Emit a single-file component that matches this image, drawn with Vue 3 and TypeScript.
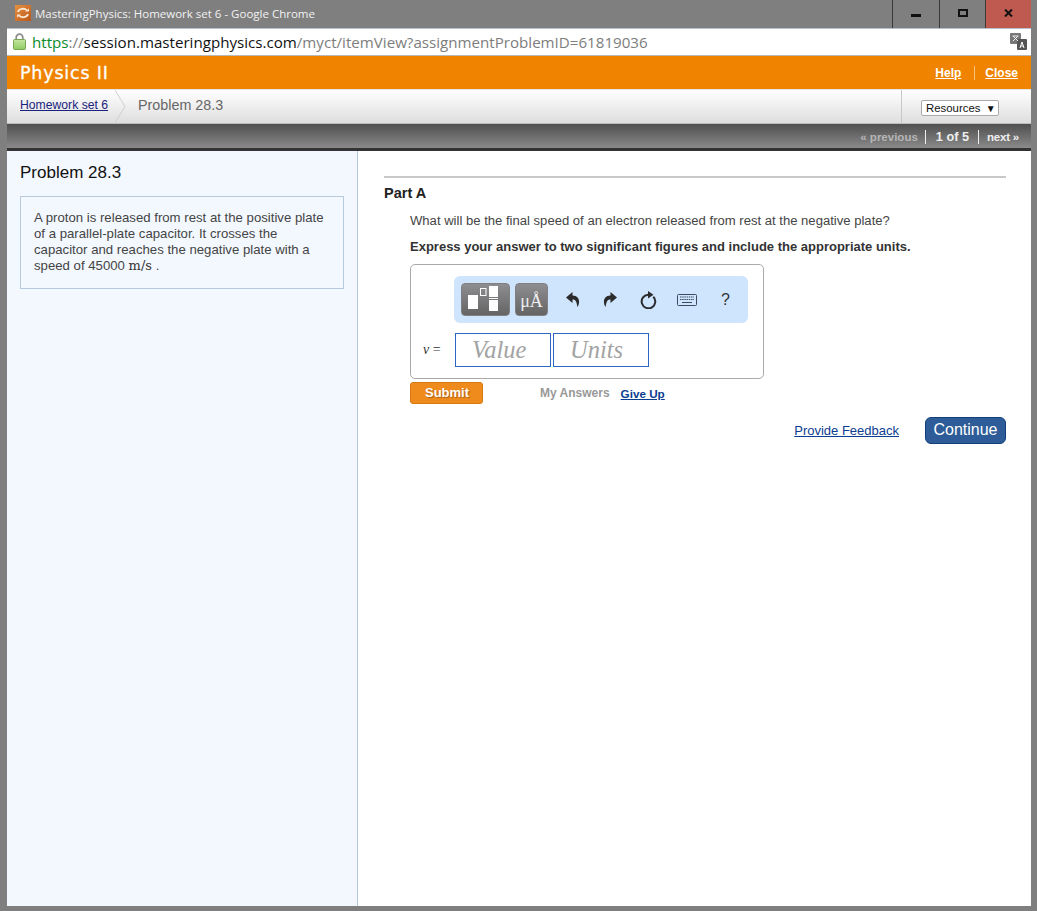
<template>
  <div class="window">
    <header class="titlebar">
      <svg class="favicon" width="16" height="16" viewBox="0 0 16 16">
        <defs>
          <linearGradient id="fav" x1="0" y1="0" x2="1" y2="1">
            <stop offset="0" stop-color="#e8913f" />
            <stop offset="1" stop-color="#b9561a" />
          </linearGradient>
        </defs>
        <rect width="16" height="16" fill="url(#fav)" />
        <path d="M3 7a5 4 0 0 1 9-1.500M13 9a5 4 0 0 1-9 1.500" fill="none" stroke="#fbe6d0" stroke-width="1.800" />
        <path d="M10 6.500h4v-3zM6 9.500H2v3z" fill="#fbe6d0" />
      </svg>
      <span class="title">MasteringPhysics: Homework set 6 - Google Chrome</span>
      <div class="controls">
        <div class="ctl ctl-min"><i class="min-glyph"></i></div>
        <div class="ctl ctl-max"><i class="max-glyph"></i></div>
        <div class="ctl ctl-close">
          <svg width="9" height="8" viewBox="0 0 9 8"><path d="M1 .5l7 7M8 .5l-7 7" stroke="#111" stroke-width="2" /></svg>
        </div>
      </div>
    </header>

    <div class="urlbar">
      <svg class="lock" width="13" height="17" viewBox="0 0 13 17">
        <defs>
          <linearGradient id="lockbody" x1="0" y1="0" x2="0" y2="1">
            <stop offset="0" stop-color="#c4e6a0" />
            <stop offset="1" stop-color="#8fcb62" />
          </linearGradient>
        </defs>
        <path d="M3.200 7V4.500a3.300 3.300 0 0 1 6.600 0V7" fill="none" stroke="#8c8c8c" stroke-width="1.700" />
        <rect x=".5" y="6.500" width="12" height="10" rx="1" fill="url(#lockbody)" stroke="#76a653" />
      </svg>
      <span class="url"><span class="https">https</span><span class="dim">://</span><span>session.masteringphysics.com</span><span class="dim">/myct/itemView?assignmentProblemID=61819036</span></span>
      <svg class="translate" width="17" height="17" viewBox="0 0 17 17">
        <rect x="0" y="0" width="11" height="11" rx="1" fill="#777" />
        <rect x="7" y="6" width="10" height="11" rx="1" fill="#555" />
        <path d="M3 3l5 5M8 3l-5 5M2.500 3h6" stroke="#eee" stroke-width="1" fill="none" />
        <path d="M10 15l2-6 2 6M10.800 13h2.400" stroke="#fff" stroke-width="1" fill="none" />
      </svg>
    </div>

    <div class="course">
      <span class="course-name">Physics II</span>
      <nav class="course-links">
        <a>Help</a>
        <i class="course-sep"></i>
        <a>Close</a>
      </nav>
    </div>

    <div class="crumbs">
      <a class="crumb-link">Homework set 6</a>
      <svg class="chevron" width="11" height="33" viewBox="0 0 11 33">
        <path d="M0 0l10 16.500L0 33" fill="none" stroke="#cfcfcf" />
      </svg>
      <span class="crumb-current">Problem 28.3</span>
      <div class="resources-wrap">
        <div class="resources">Resources <span class="caret">▼</span></div>
      </div>
    </div>

    <div class="pager">
      <span class="prev">« previous</span>
      <i class="pager-sep sep-first"></i>
      <span class="count">1 of 5</span>
      <i class="pager-sep sep-second"></i>
      <span class="next">next »</span>
    </div>

    <main class="content">
      <aside class="sidebar">
        <h2>Problem 28.3</h2>
        <div class="intro">
          A proton is released from rest at the positive plate of a parallel-plate capacitor. It crosses the capacitor and reaches the negative plate with a speed of 45000 <span class="unit">m/s</span> .
        </div>
      </aside>

      <section class="part">
        <div class="part-title">Part A</div>
        <div class="part-body">
          <p class="question">What will be the final speed of an electron released from rest at the negative plate?</p>
          <p class="instruction">Express your answer to two significant figures and include the appropriate units.</p>

          <div class="answer-box">
            <div class="toolbar">
              <div class="tool tool-templates">
                <svg width="47" height="31" viewBox="0 0 47 31">
                  <rect x="6" y="11" width="10" height="14" fill="#fff" />
                  <rect x="18.500" y="4.500" width="5.500" height="7" fill="none" stroke="#fff" />
                  <rect x="27" y="2" width="9" height="11" fill="#fff" />
                  <rect x="27" y="14" width="9" height="1" fill="#fff" />
                  <rect x="27" y="16" width="9" height="11" fill="#fff" />
                </svg>
              </div>
              <div class="tool tool-units">μÅ</div>
              <div class="icons">
                <svg width="14" height="15" viewBox="0 0 14 15"><path d="M6.500 0L0 5.500 6.500 11V7.500c2.700 0 4.300 1.700 4.800 7.500C14 12 14.500 3.500 6.500 3.500z" fill="#2b2b2b" /></svg>
                <svg width="14" height="15" viewBox="0 0 14 15"><path d="M7.500 0L14 5.500 7.500 11V7.500c-2.700 0-4.300 1.700-4.800 7.500C0 12-.5 3.500 7.500 3.500z" fill="#2b2b2b" /></svg>
                <svg width="17" height="18" viewBox="0 0 17 18"><path d="M13.300 5.700A6.800 6.800 0 1 1 8 3.700" fill="none" stroke="#2b2b2b" stroke-width="2" /><path d="M8 0l5.500 3.700L8 7.400z" fill="#2b2b2b" /></svg>
                <svg width="20" height="12" viewBox="0 0 20 12">
                  <rect x=".5" y=".5" width="19" height="11" rx="1" fill="none" stroke="#3d4c5c" />
                  <path d="M3 3h14M3 5.500h14" stroke="#3d4c5c" stroke-dasharray="1.500 .7" />
                  <path d="M5 8.500h10" stroke="#3d4c5c" />
                </svg>
                <span class="help">?</span>
              </div>
            </div>
            <div class="inputs">
              <span class="var"><em>v</em> =</span>
              <div class="field">Value</div>
              <div class="field">Units</div>
            </div>
          </div>

          <div class="actions">
            <button class="submit">Submit</button>
            <span class="my-answers">My Answers</span>
            <a class="give-up">Give Up</a>
          </div>
        </div>
        <div class="footer">
          <a class="feedback">Provide Feedback</a>
          <button class="continue">Continue</button>
        </div>
      </section>
    </main>
  </div>
</template>

<script setup lang="ts">
</script>

<style>
html, body {
  margin: 0;
  background: #7f7f7f;
}
</style>

<style scoped>
.window {
  width: 1037px;
  height: 911px;
  overflow: hidden;
  background: #7f7f7f;
  display: flex;
  flex-direction: column;
  font-family: "Liberation Sans", Arial, sans-serif;
  box-sizing: border-box;
  padding: 0 6px 5px 7px;
}

.titlebar {
  height: 29px;
  flex: none;
  display: flex;
  align-items: flex-start;
}

.favicon {
  margin: 5px 4px 0 8px;
}

.title {
  font-family: "Open Sans", sans-serif;
  font-size: 11.500px;
  line-height: 28px;
  color: #f2f2f2;
}

.controls {
  margin-left: auto;
  display: flex;
  height: 29px;
  border-bottom: 1px solid #3a3a3a;
  box-sizing: border-box;
}

.ctl {
  height: 28px;
  display: flex;
  justify-content: center;
  border-left: 1px solid #3a3a3a;
  box-sizing: border-box;
}

.ctl-min { width: 47px; }
.ctl-max { width: 46px; }
.ctl-close { width: 46px; background: #bf5a50; padding-top: 9px; }

.min-glyph {
  width: 10px;
  height: 3px;
  background: #111;
  margin-top: 14px;
}

.max-glyph {
  width: 6px;
  height: 4px;
  border: 2px solid #111;
  margin-top: 9px;
}

.urlbar {
  height: 25px;
  flex: none;
  background: #fff;
  display: flex;
  align-items: center;
  border-top: 1px solid #b9c3cc;
  border-bottom: 1px solid #b8b8b8;
  margin-top: -1px;
  padding-bottom: 1px;
}

.lock {
  margin: 0 6px 0 6px;
}

.url {
  font-family: "Open Sans", sans-serif;
  font-size: 15.130px;
  color: #111;
  white-space: nowrap;
}

.https { color: #0a8a2a; }
.dim { color: #7d7d7d; }

.translate {
  margin-left: auto;
  margin-right: 4px;
}

.course {
  height: 33px;
  flex: none;
  background: #f08300;
  border-bottom: 1px solid #e5e5e5;
  display: flex;
  align-items: center;
  justify-content: space-between;
  padding: 0 13px;
}

.course-name {
  font-family: "DejaVu Sans", sans-serif;
  font-size: 17.500px;
  font-weight: 500;
  letter-spacing: .8px;
  color: #fff;
  -webkit-text-stroke: .3px #fff;
}

.course-links {
  display: flex;
  align-items: center;
  font-size: 12px;
  font-weight: 700;
  color: #fff;
}

.course-links a {
  color: #fff;
  text-decoration: underline;
}

.course-sep {
  width: 1px;
  height: 14px;
  background: #f7c27f;
  margin: 0 10px 0 13px;
}

.crumbs {
  height: 33px;
  flex: none;
  display: flex;
  align-items: center;
  background: linear-gradient(#fff, #dedede);
  border-bottom: 1px solid #bdbdbd;
}

.crumb-link {
  margin-left: 13px;
  font-size: 12.200px;
  color: #1a237e;
  text-decoration: underline;
  position: relative;
  top: -2px;
}

.chevron {
  margin-left: 7px;
  flex: none;
}

.crumb-current {
  margin-left: 12px;
  font-size: 14.300px;
  color: #666;
  position: relative;
  top: -2px;
}

.resources-wrap {
  margin-left: auto;
  width: 130px;
  height: 33px;
  display: flex;
  align-items: center;
  border-left: 1px solid #c8c8c8;
  padding: 2px 0 0 19px;
  box-sizing: border-box;
}

.resources {
  width: 78px;
  height: 16px;
  box-sizing: border-box;
  background: #fff;
  border: 1px solid #aaa;
  border-radius: 2px;
  font-size: 11.400px;
  line-height: 14px;
  color: #111;
  padding-left: 4px;
  white-space: nowrap;
}

.caret {
  font-size: 10px;
  margin-left: 2px;
}

.pager {
  height: 23px;
  padding-top: 1px;
  flex: none;
  background: linear-gradient(#4f4f4f, #8a8a8a);
  border-bottom: 3px solid #333;
  display: flex;
  align-items: center;
  justify-content: flex-end;
  padding-right: 12px;
  font-size: 12px;
  font-weight: 700;
  color: #eee;
}

.prev { color: #b5b5b5; font-size: 11.500px; }
.count { color: #eee; font-size: 12.700px; }
.next { font-size: 11.500px; letter-spacing: -.2px; }

.pager-sep {
  width: 1px;
  height: 14px;
  background: #f0f0f0;
}

.sep-first { margin: 0 10px 0 7px; }
.sep-second { margin: 0 8px 0 9px; }

.content {
  flex: 1;
  min-height: 0;
  display: flex;
  background: #fff;
}

.sidebar {
  width: 351px;
  flex: none;
  background: #f3f8ff;
  border-right: 1px solid #b7c5d8;
  padding: 12px 13px 0;
  box-sizing: border-box;
}

.sidebar h2 {
  margin: 0 0 13px;
  font-size: 17px;
  line-height: 20px;
  font-weight: 400;
  color: #111;
}

.intro {
  width: 324px;
  height: 93px;
  box-sizing: border-box;
  border: 1px solid #b7c9dc;
  padding: 13px 13px 0;
  font-size: 13.200px;
  line-height: 16px;
  color: #444;
}

.unit {
  font-family: "DejaVu Serif", serif;
  font-size: 13px;
  line-height: 1;
  color: #333;
}

.part {
  flex: 1;
  padding: 25px 25px 0 26px;
  min-width: 0;
}

.part-title {
  border-top: 2px solid #c8c8c8;
  padding-top: 8px;
  font-size: 14.500px;
  line-height: 15px;
  font-weight: 700;
  color: #222;
}

.part-body {
  margin-left: 26px;
}

.question {
  margin: 12px 0 0;
  font-size: 13.080px;
  line-height: 15px;
  color: #444;
}

.instruction {
  margin: 11px 0 0;
  font-size: 13px;
  line-height: 15px;
  font-weight: 700;
  color: #333;
}

.answer-box {
  width: 354px;
  height: 115px;
  margin-top: 10px;
  box-sizing: border-box;
  border: 1px solid #aaa;
  border-radius: 5px;
  padding: 11px 15px 0 43px;
}

.toolbar {
  width: 294px;
  height: 47px;
  box-sizing: border-box;
  background: #cfe4fd;
  border-radius: 6px;
  display: flex;
  align-items: center;
  padding-left: 7px;
}

.tool {
  height: 33px;
  border-radius: 4px;
  background: linear-gradient(#8e8e92, #646464);
  border: 1px solid #808080;
  box-sizing: border-box;
  display: flex;
  align-items: center;
  justify-content: center;
  color: #eee;
}

.tool-templates {
  width: 49px;
}

.tool-units {
  width: 33px;
  margin-left: 5px;
  padding-top: 3px;
  font-family: "Liberation Serif", serif;
  font-size: 18px;
}

.icons {
  display: flex;
  align-items: center;
  margin-left: 18px;
  flex: 1;
}

.icons svg:nth-child(1) { margin-right: 23px; }
.icons svg:nth-child(2) { margin-right: 23px; }
.icons svg:nth-child(3) { margin-right: 20px; }
.icons svg:nth-child(4) { margin-right: 24px; }

.help {
  font-size: 16px;
  color: #333;
}

.inputs {
  display: flex;
  align-items: center;
  margin-top: 10px;
  margin-left: -31px;
}

.var {
  width: 32px;
  font-family: "Liberation Serif", serif;
  font-size: 14px;
  color: #333;
}

.field {
  width: 96px;
  height: 34px;
  box-sizing: border-box;
  border: 1px solid #2b66c6;
  margin-right: 2px;
  padding-left: 16px;
  font-family: "Liberation Serif", serif;
  font-style: italic;
  font-size: 24.500px;
  line-height: 32px;
  color: #a3a3a3;
}

.actions {
  display: flex;
  align-items: center;
  margin-top: 3px;
  height: 22px;
}

.submit {
  width: 73px;
  height: 22px;
  padding: 0 0 2px 1px;
  background: #ef8a1d;
  border: 1px solid #d87a10;
  border-radius: 3px;
  color: #fff;
  font-family: inherit;
  font-size: 13px;
  font-weight: 700;
  text-shadow: 1px 1px 1px rgba(0, 0, 0, .3);
}

.my-answers {
  margin-left: 57px;
  font-size: 12px;
  font-weight: 700;
  color: #999;
}

.give-up {
  margin-left: 11px;
  font-size: 11.700px;
  font-weight: 700;
  color: #0b3d91;
  text-decoration: underline;
}

.footer {
  display: flex;
  align-items: center;
  justify-content: flex-end;
  margin-top: 13px;
}

.feedback {
  font-size: 13px;
  color: #0b3d91;
  text-decoration: underline;
  margin-right: 26px;
}

.continue {
  width: 81px;
  height: 27px;
  padding: 0 0 2px;
  background: #2d5c98;
  border: 1px solid #123f77;
  border-radius: 6px;
  color: #fff;
  font-family: inherit;
  font-size: 16px;
}
</style>
